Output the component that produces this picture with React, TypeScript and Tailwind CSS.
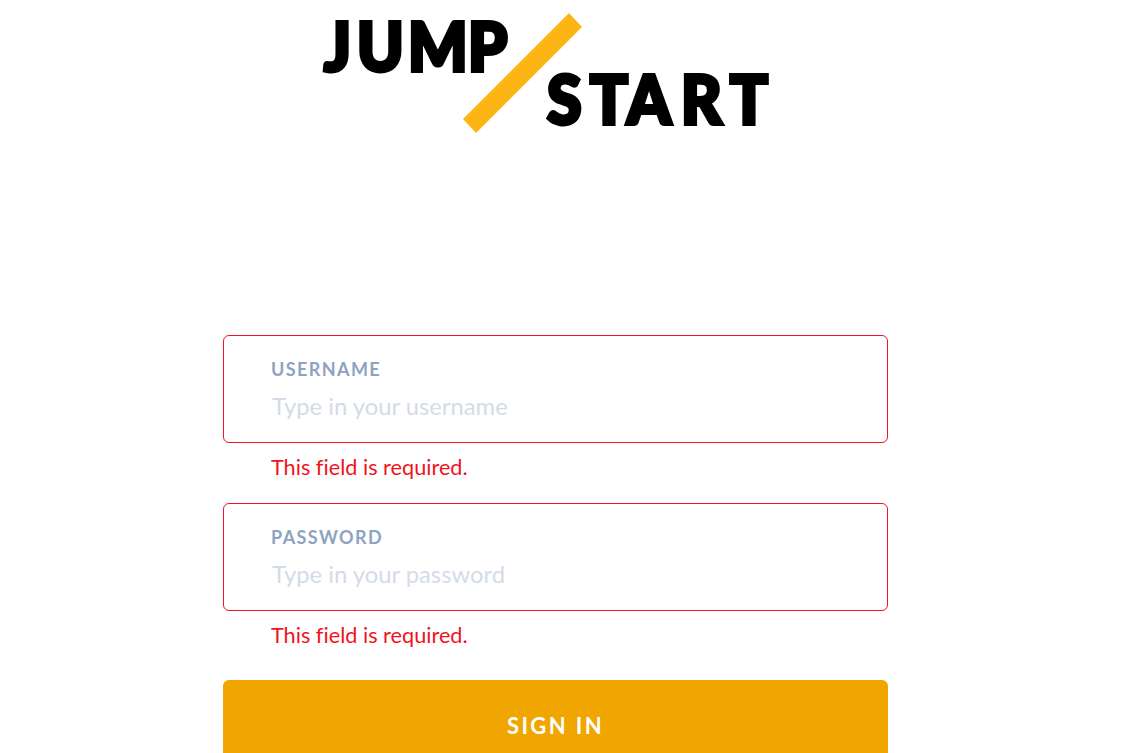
// logo letters are squeezed a bit, so x positions get divided by the same scale
const LOGO_SCALE = 0.95;
const jumpX = [5, 38, 89, 149].map((x) => x / LOGO_SCALE).join(" ");
const startX = [228, 271, 308, 362, 411].map((x) => x / LOGO_SCALE).join(" ");

function Logo() {
  return (
    <svg width="474" height="140" viewBox="0 0 474 140" className="block overflow-visible">
      <g
        transform={`scale(${LOGO_SCALE} 1)`}
        fontFamily="Lato, sans-serif"
        fontWeight="900"
        fontSize="66"
        fill="#000"
        stroke="#000"
        strokeWidth="4"
      >
        <text x={jumpX} y="71">JUMP</text>
        <text x={startX} y="124">START</text>
      </g>
      <polygon points="250,13 263,27 157,133 144,119" fill="#fdb515" />
    </svg>
  );
}

function Field({ label, placeholder, name, type }: { label: string; placeholder: string; name: string; type: string }) {
  return (
    <div className="flex flex-col">
      <div className="flex h-[108px] flex-col rounded-[6px] border border-[#f01420] pl-[47px] pt-[20px]">
        <label htmlFor={name} className="text-[18px] leading-[26px] font-bold tracking-[1.4px] text-[#8ea3bf]">
          {label}
        </label>
        <input
          id={name}
          type={type}
          placeholder={placeholder}
          className="mt-[9px] h-[30px] w-full bg-transparent pl-px text-[23.8px] leading-[30px] font-normal outline-none placeholder:text-[#d3dce8]"
        />
      </div>
      <p className="mt-[9px] h-[31px] pl-[48px] text-[21.7px] leading-[30px] text-[#f01420] [font-variant-ligatures:none]">This field is required.</p>
    </div>
  );
}

export default function App() {
  return (
    <div className="h-[753px] w-[1111px] overflow-hidden bg-white font-['Lato',sans-serif]">
      <div className="flex flex-col items-center">
        <Logo />
        <form className="mt-[195px] flex w-[665px] flex-col gap-[20px]">
          <Field label="USERNAME" placeholder="Type in your username" name="username" type="text" />
          <Field label="PASSWORD" placeholder="Type in your password" name="password" type="password" />
          <button type="button" className="mt-[9px] h-[90px] rounded-[6px] bg-[#f0a500] text-[22px] font-bold tracking-[2.4px] text-white">
            SIGN IN
          </button>
        </form>
      </div>
    </div>
  );
}
